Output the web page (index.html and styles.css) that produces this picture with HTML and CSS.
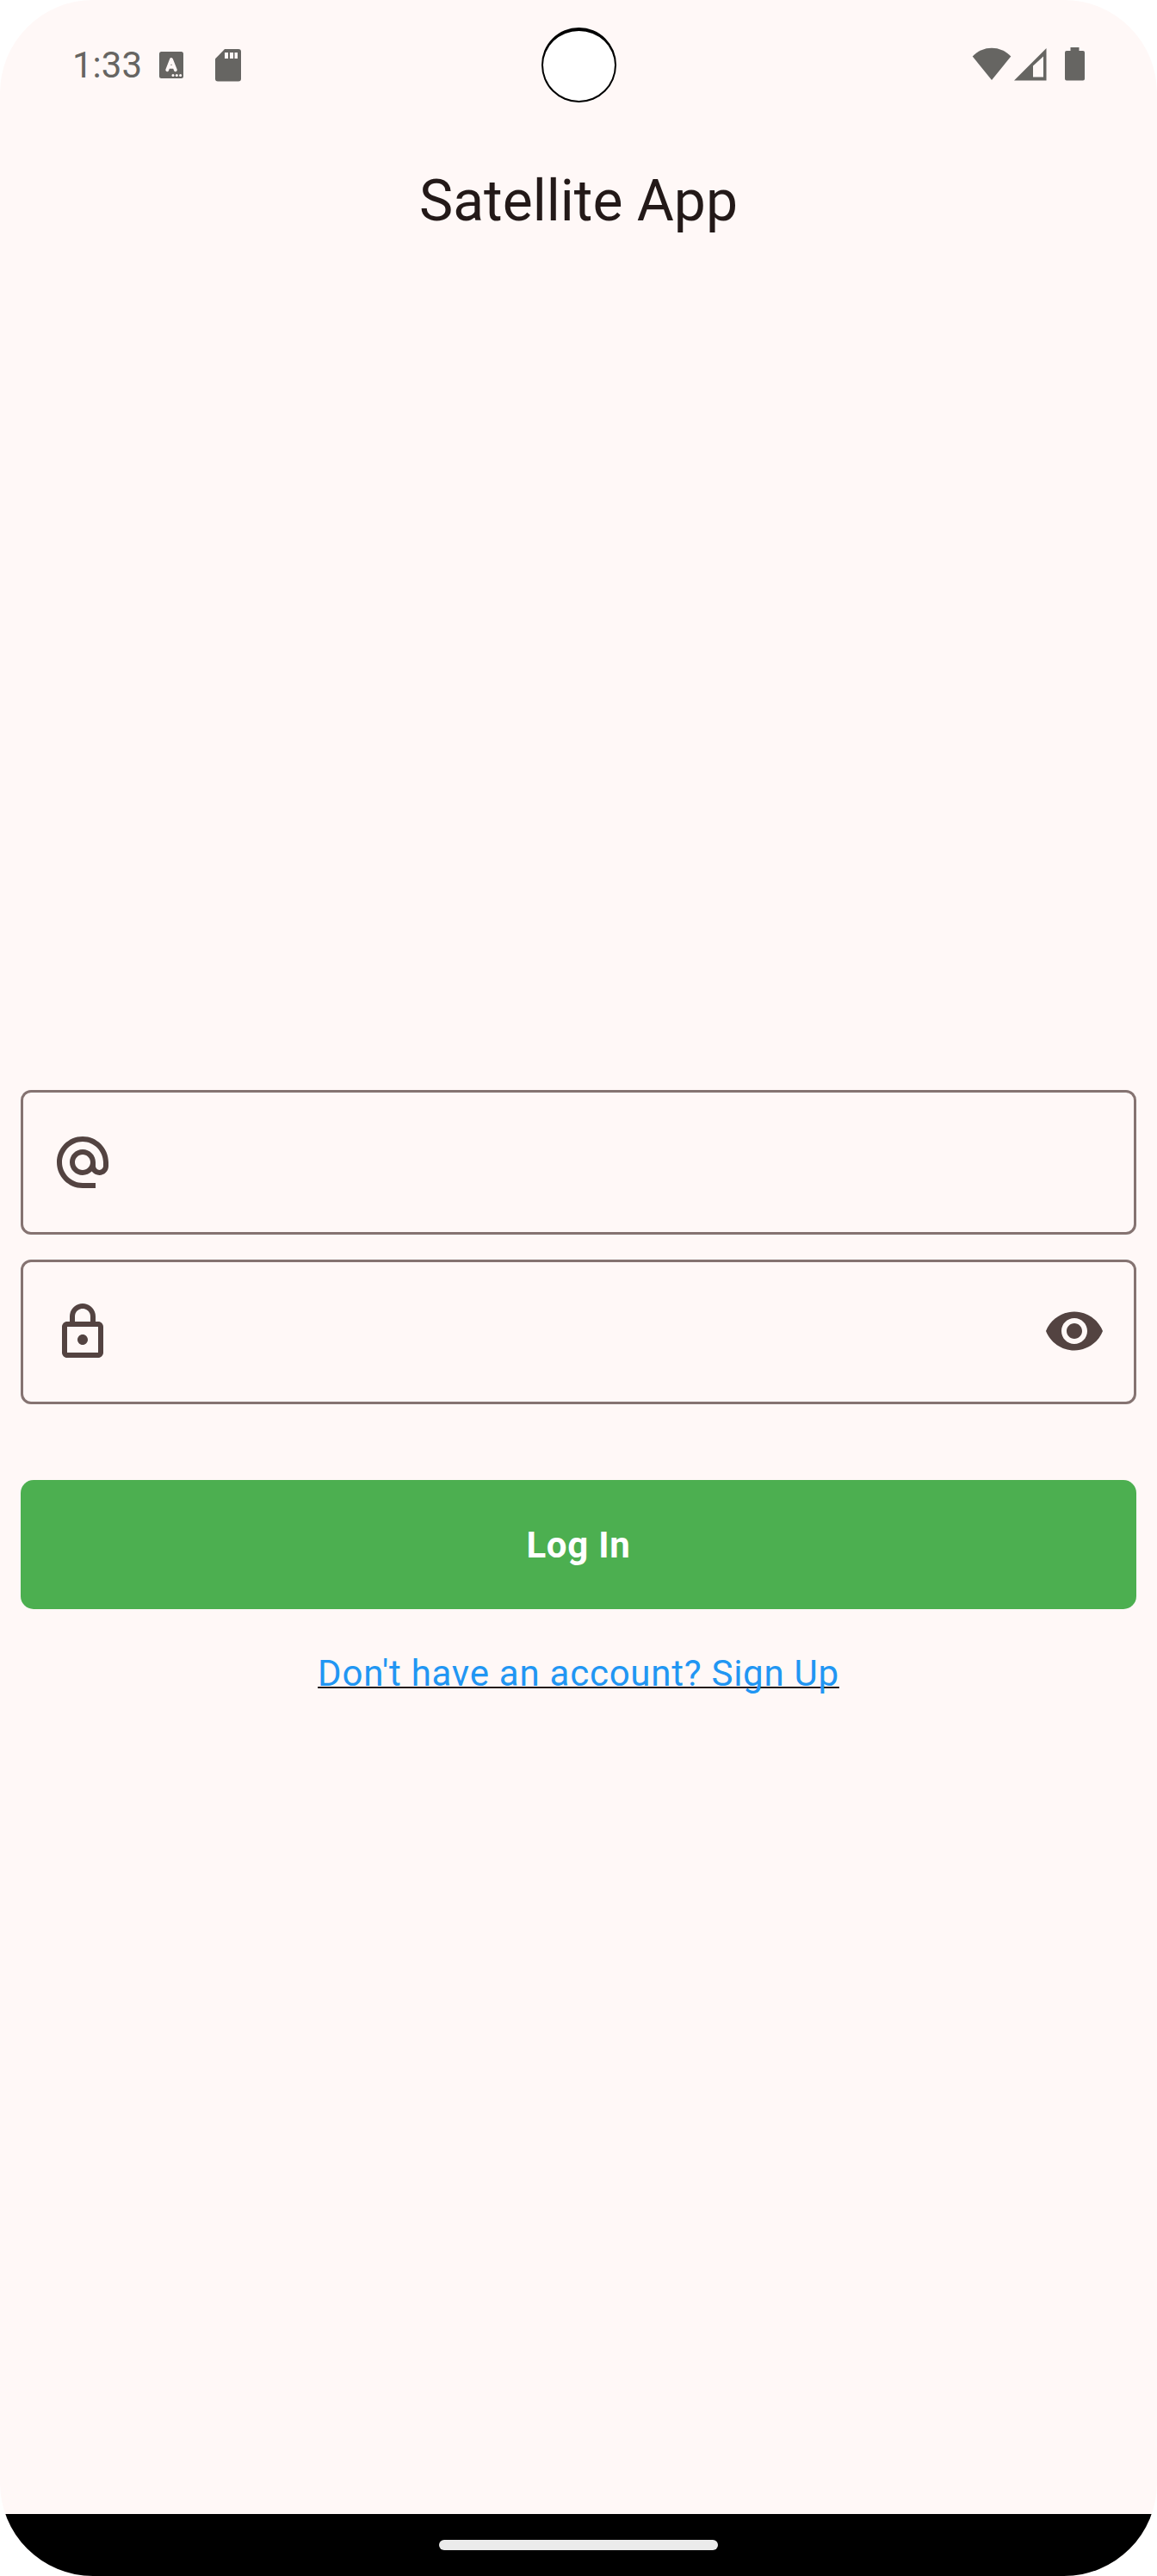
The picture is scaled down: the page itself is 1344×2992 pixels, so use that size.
FILE: index.html
```html
<!DOCTYPE html>
<html lang="en">
<head>
<meta charset="utf-8">
<title>Satellite App</title>
<link rel="stylesheet" href="styles.css">
</head>
<body>
<div class="screen">
  <header class="status-bar">
    <div class="status-left">
      <span class="clock">1:33</span>
      <svg class="icon-keyboard" width="28" height="31" viewBox="0 0 28 31">
        <rect width="28" height="31" rx="2.5" fill="#666562"/>
        <path d="M9.200 21.300 14 9 18.900 21.300M11 17.800H17" fill="none" stroke="#fff8f7" stroke-width="3.800" stroke-linecap="round" stroke-linejoin="round"/>
        <circle cx="16" cy="27.500" r="1.500" fill="#fff8f7"/><circle cx="20.300" cy="27.500" r="1.500" fill="#fff8f7"/><circle cx="24.600" cy="27.500" r="1.500" fill="#fff8f7"/>
      </svg>
      <svg class="icon-sd" width="30" height="38" viewBox="0 0 30 38">
        <path d="M11 0H27a3 3 0 0 1 3 3V34.500a3 3 0 0 1-3 3H3a3 3 0 0 1-3-3V11.300Z" fill="#666562"/>
        <path d="M11 4h4v7h-4zM17 4h4v7h-4zM22.500 4h3.500v7h-3.500z" fill="#fff8f7"/>
      </svg>
    </div>
    <div class="camera"></div>
    <div class="status-right">
      <svg class="icon-wifi" width="46" height="38" viewBox="0 0 46 38">
        <path d="M23 38 .700 10.500C7 4 14.500.700 23 .700S39 4 45.300 10.500Z" fill="#666562"/>
      </svg>
      <svg class="icon-signal" width="38" height="38" viewBox="0 0 38 38">
        <path fill-rule="evenodd" d="M0 37.500 37.500 0V37.500ZM22 33.500H34V9.500L22 20.500Z" fill="#666562"/>
      </svg>
      <svg class="icon-battery" width="23" height="39" viewBox="0 0 23 39">
        <path d="M6.500 0h10v4H21a2 2 0 0 1 2 2V36.500a2 2 0 0 1-2 2H2a2 2 0 0 1-2-2V6a2 2 0 0 1 2-2H6.500Z" fill="#666562"/>
      </svg>
    </div>
  </header>
  <h1 class="title">Satellite App</h1>
  <form class="login">
    <div class="field">
      <svg class="icon-at" width="72" height="72" viewBox="0 0 24 24" fill="#534341"><path d="M12 2C6.480 2 2 6.480 2 12s4.480 10 10 10h5v-2h-5c-4.340 0-8-3.660-8-8s3.660-8 8-8 8 3.660 8 8v1.430c0 .790-.710 1.570-1.500 1.570s-1.500-.780-1.500-1.570V12c0-2.760-2.240-5-5-5s-5 2.240-5 5 2.240 5 5 5c1.380 0 2.640-.560 3.540-1.470.650.890 1.770 1.470 2.960 1.470 1.970 0 3.500-1.600 3.500-3.570V12c0-5.520-4.480-10-10-10zm0 13c-1.660 0-3-1.340-3-3s1.340-3 3-3 3 1.340 3 3-1.340 3-3 3z"/></svg>
    </div>
    <div class="field">
      <svg class="icon-lock" width="72" height="72" viewBox="0 0 24 24" fill="#534341"><path d="M18 8h-1V6c0-2.760-2.240-5-5-5S7 3.240 7 6v2H6c-1.100 0-2 .900-2 2v10c0 1.100.900 2 2 2h12c1.100 0 2-.900 2-2V10c0-1.100-.900-2-2-2zM9 6c0-1.660 1.340-3 3-3s3 1.340 3 3v2H9V6zm9 14H6V10h12v10zm-6-3c1.100 0 2-.900 2-2s-.900-2-2-2-2 .900-2 2 .900 2 2 2z"/></svg>
      <svg class="icon-eye" width="72" height="72" viewBox="0 0 24 24" fill="#534341"><path d="M12 4.500C7 4.500 2.730 7.610 1 12c1.730 4.390 6 7.500 11 7.500s9.270-3.110 11-7.500c-1.730-4.390-6-7.500-11-7.500zM12 17c-2.760 0-5-2.240-5-5s2.240-5 5-5 5 2.240 5 5-2.240 5-5 5zm0-8c-1.660 0-3 1.340-3 3s1.340 3 3 3 3-1.340 3-3-1.340-3-3-3z"/></svg>
    </div>
    <button class="submit" type="button">Log In</button>
    <div class="signup"><span class="signup-line"><a class="signup-link">Don't have an account? Sign Up</a></span></div>
  </form>
  <footer class="nav-bar"><div class="handle"></div></footer>
</div>
</body>
</html>
```

FILE: styles.css
```css
* { box-sizing: border-box; }
body {
  margin: 0;
  background: #fff;
  font-family: Roboto, "Liberation Sans", sans-serif;
}
svg { display: block; flex: none; }
.screen {
  display: flex;
  flex-direction: column;
  width: 1344px;
  height: 2992px;
  border-radius: 108px;
  overflow: hidden;
  background: #fff8f7;
}
.status-bar {
  display: grid;
  grid-template-columns: 1fr 87px 1fr;
  height: 150px;
}
.status-left { display: flex; padding-left: 84px; }
.clock {
  width: 101px;
  padding-top: 51px;
  font-size: 42px;
  line-height: 50px;
  color: #666562;
  white-space: nowrap;
}
.icon-keyboard { margin-top: 60px; }
.icon-sd { margin: 57px 0 0 37px; }
.camera {
  width: 87px;
  height: 87px;
  margin-top: 31.500px;
  border: 2px solid #000;
  border-top-width: 4px;
  border-radius: 50%;
  background: #fff;
}
.status-right { display: flex; justify-content: flex-end; padding-right: 84px; }
.icon-wifi { margin-top: 55px; }
.icon-signal { margin: 56px 0 0 3px; }
.icon-battery { margin: 55px 0 0 21px; }
.title {
  margin: 42px 0 0;
  height: 84px;
  font-size: 66px;
  font-weight: 400;
  line-height: 84px;
  text-align: center;
  color: #231918;
}
.login {
  display: flex;
  flex-direction: column;
  flex: 1;
  padding: 990px 24px 0;
}
.field {
  display: flex;
  align-items: center;
  justify-content: space-between;
  height: 168px;
  padding: 0 33px;
  border: 3px solid #857371;
  border-radius: 12px;
}
.field + .field { margin-top: 29px; }
.icon-eye { margin-top: -3px; }
.submit {
  height: 150px;
  margin: 88px 0 0;
  padding: 2px 0 0;
  border: 0;
  border-radius: 15px;
  background: #4caf50;
  color: #fff;
  font: 700 42px/60px Roboto, sans-serif;
  letter-spacing: .750px;
}
.signup {
  margin-top: 45px;
  font-size: 42px;
  line-height: 60px;
  letter-spacing: .750px;
  text-align: center;
}
.signup-line {
  text-decoration: underline #231918 2px;
  text-decoration-skip-ink: none;
  text-underline-offset: 1px;
}
.signup-link { color: #2196f3; }
.nav-bar {
  display: flex;
  justify-content: center;
  height: 72px;
  padding-top: 30px;
  background: #000;
}
.handle {
  width: 324px;
  height: 12px;
  border-radius: 6px;
  background: #ebebeb;
}
```
